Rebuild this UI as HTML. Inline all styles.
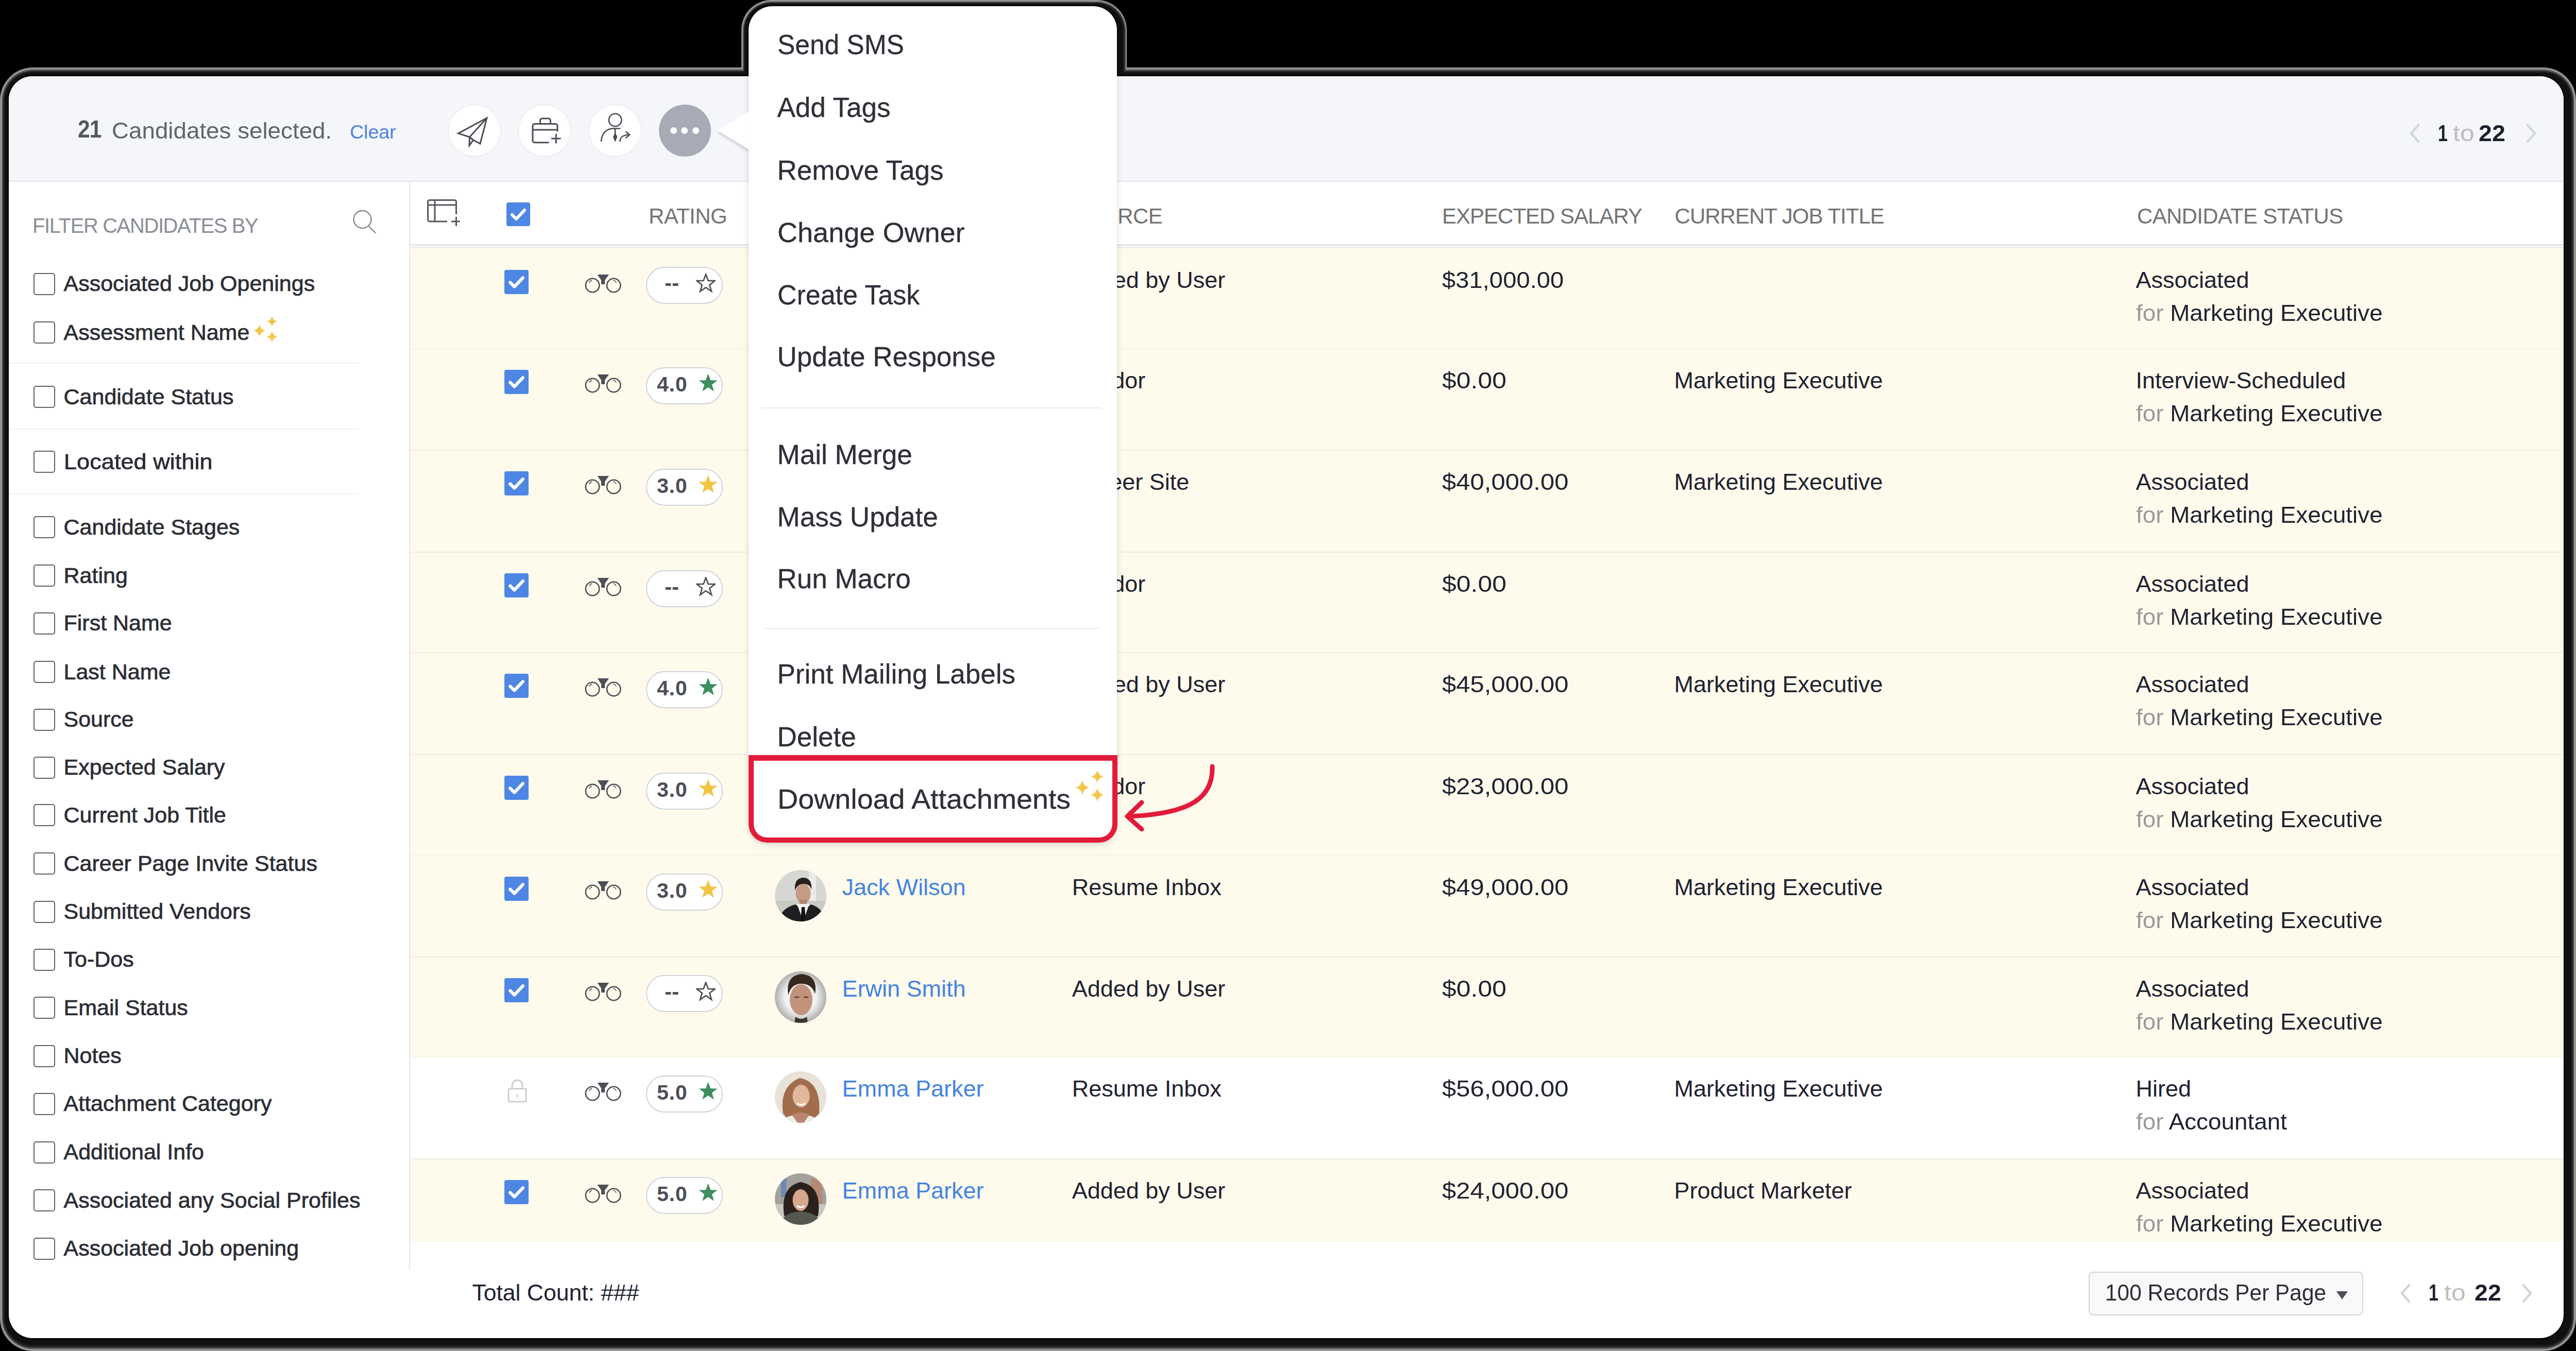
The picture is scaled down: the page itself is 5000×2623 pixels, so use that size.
<!DOCTYPE html>
<html><head><meta charset="utf-8"><title>Candidates</title>
<style>
html,body{margin:0;padding:0;}
body{width:5000px;height:2623px;background:#000;position:relative;overflow:hidden;font-family:"Liberation Sans", sans-serif;}
.r{position:absolute;}
.t{position:absolute;white-space:nowrap;line-height:1em;}
</style></head><body>
<div class="r" style="left:0px;top:131px;width:5000px;height:2492px;background:#949494;border-radius:64px;"></div><div class="r" style="left:1439px;top:0px;width:748px;height:158px;background:#949494;border-radius:58px 58px 0 0;"></div><div class="r" style="left:4px;top:135px;width:4992px;height:2484px;background:#4f4f4f;border-radius:60px;"></div><div class="r" style="left:1441.5px;top:3px;width:743.0px;height:155px;background:#4f4f4f;border-radius:56px 56px 0 0;"></div><div class="r" style="left:6px;top:138px;width:4988px;height:2478px;background:#222222;border-radius:57px;"></div><div class="r" style="left:1443.5px;top:5px;width:739.0px;height:153px;background:#222222;border-radius:54px 54px 0 0;"></div><div class="r" style="left:9px;top:141px;width:4982px;height:2471px;background:#101010;border-radius:54px;"></div><div class="r" style="left:1445px;top:7px;width:735px;height:151px;background:#101010;border-radius:52px 52px 0 0;"></div><div class="r" style="left:15px;top:146px;width:4963px;height:2455px;background:#040404;border-radius:48px;"></div><div class="r" style="left:1451px;top:11px;width:719px;height:147px;background:#040404;border-radius:48px 48px 0 0;"></div><div class="r" style="left:17px;top:148px;width:4959px;height:2450px;background:#fff;border-radius:46px;overflow:hidden;"><div class="r" style="left:-17px;top:-148px;width:5000px;height:2623px;"><div class="r" style="left:17px;top:148px;width:4959px;height:203px;background:#f4f6fa;"></div><div class="r" style="left:17px;top:351px;width:4959px;height:2px;background:#e3e4e7;"></div><div class="t" style="left:151.0px;top:225.5px;font-size:49px;color:#55575f;transform:scaleX(0.87);transform-origin:0 0;font-weight:700;letter-spacing:-1px;">21</div><div class="t" style="left:217.0px;top:231.9px;font-size:44.5px;color:#62646c;transform:scaleX(1.028);transform-origin:0 0;">Candidates selected.</div><div class="t" style="left:679.0px;top:237.9px;font-size:37.5px;color:#4c84e2;">Clear</div><div class="r" style="left:869.6px;top:202.5px;width:102.0px;height:101.5px;background:#fff;border:1.5px solid #e2e3e7;box-sizing:border-box;border-radius:50%;"></div><div class="r" style="left:1006px;top:202.5px;width:102px;height:101.5px;background:#fff;border:1.5px solid #e2e3e7;box-sizing:border-box;border-radius:50%;"></div><div class="r" style="left:1142.5px;top:202.5px;width:102.0px;height:101.5px;background:#fff;border:1.5px solid #e2e3e7;box-sizing:border-box;border-radius:50%;"></div><div class="r" style="left:1278.5px;top:203px;width:101.0px;height:101px;background:#a6abb6;border-radius:50%;"></div><div class="r" style="left:1300.5px;top:247px;width:13.0px;height:13px;background:#fff;border-radius:50%;"></div><div class="r" style="left:1322.0px;top:247px;width:13.0px;height:13px;background:#fff;border-radius:50%;"></div><div class="r" style="left:1343.5px;top:247px;width:13.0px;height:13px;background:#fff;border-radius:50%;"></div><svg class="r" style="left:870px;top:203px;" width="101" height="101" viewBox="0 0 101 101"><g fill="none" stroke="#4b4d56" stroke-width="3" stroke-linejoin="miter"><path d="M75 26 L19.5 56 L41.5 63 L41 79.5 L48.5 69 L62 76 Z"/><path d="M75 26 L41.5 63 L48.5 69"/></g></svg><svg class="r" style="left:1006.5px;top:203px;" width="101" height="101" viewBox="0 0 101 101"><g fill="none" stroke="#4b4d56" stroke-width="3"><path d="M58.5 73.8 H31 a4 4 0 0 1 -4 -4 V41.5 a4 4 0 0 1 4 -4 H71 a4 4 0 0 1 4 4 V52.6"/><path d="M27 49 H75"/><path d="M41.5 37.5 V31 a4 4 0 0 1 4 -4 H57.5 a4 4 0 0 1 4 4 V37.5"/><path d="M72.3 57 V75.5 M63 66 H81.6"/></g></svg><svg class="r" style="left:1142.5px;top:203px;" width="102" height="101" viewBox="0 0 102 101"><g fill="none" stroke="#4b4d56" stroke-width="2.6"><circle cx="51" cy="30" r="12.3"/><path d="M24 72 C24.5 56 34 47 47 46.5 H61"/><path d="M51 47 V60"/><path d="M51 57 L48.3 63 L51 69.5 L53.7 63 Z" fill="#4b4d56"/><path d="M60.5 72 C60.5 63 66 59 78.5 58.5"/><path d="M71.5 52.5 L79 58.5 L71.5 65"/></g></svg><svg class="r" style="left:4672px;top:239px;" width="30" height="40" viewBox="0 0 30 40"><path d="M22 4 L8 20 L22 36" fill="none" stroke="#d3d6db" stroke-width="4.6" stroke-linecap="round"/></svg><div class="t" style="left:4731.5px;top:238.1px;font-size:43.5px;color:#1d1f2c;transform:scaleX(0.78);transform-origin:0 0;font-weight:700;">1</div><div class="t" style="left:4761.0px;top:238.1px;font-size:43.5px;color:#bdbdbd;transform:scaleX(1.15);transform-origin:0 0;">to</div><div class="t" style="left:4811.0px;top:238.1px;font-size:43.5px;color:#1d1f2c;transform:scaleX(1.07);transform-origin:0 0;font-weight:700;">22</div><svg class="r" style="left:4898px;top:239px;" width="30" height="40" viewBox="0 0 30 40"><path d="M8 4 L22 20 L8 36" fill="none" stroke="#d3d6db" stroke-width="4.6" stroke-linecap="round"/></svg><div class="r" style="left:794px;top:353px;width:2px;height:2112px;background:#e6e6e9;"></div><div class="t" style="left:63.0px;top:418.4px;font-size:40px;color:#8b8e96;letter-spacing:-1.4px;">FILTER CANDIDATES BY</div><svg class="r" style="left:680px;top:403px;" width="56" height="56" viewBox="0 0 56 56"><g fill="none" stroke="#85878d" stroke-width="2.4"><circle cx="23.5" cy="23" r="17"/><path d="M35 35.5 L48.5 49" stroke-linecap="round"/></g></svg><div class="r" style="left:64.5px;top:529.6px;width:42.5px;height:43.0px;border:2.5px solid #5d6069;border-radius:5px;box-sizing:border-box;background:#fff;"></div><div class="t" style="left:123.5px;top:529.2px;font-size:43px;color:#2b2d34;-webkit-text-stroke:0.7px #2b2d34;">Associated Job Openings</div><div class="r" style="left:64.5px;top:624px;width:42.5px;height:43px;border:2.5px solid #5d6069;border-radius:5px;box-sizing:border-box;background:#fff;"></div><div class="t" style="left:123.5px;top:623.6px;font-size:43px;color:#2b2d34;-webkit-text-stroke:0.7px #2b2d34;">Assessment Name</div><div class="r" style="left:64.5px;top:749.4px;width:42.5px;height:43.0px;border:2.5px solid #5d6069;border-radius:5px;box-sizing:border-box;background:#fff;"></div><div class="t" style="left:123.5px;top:749.0px;font-size:43px;color:#2b2d34;-webkit-text-stroke:0.7px #2b2d34;">Candidate Status</div><div class="r" style="left:64.5px;top:875.4px;width:42.5px;height:43.0px;border:2.5px solid #5d6069;border-radius:5px;box-sizing:border-box;background:#fff;"></div><div class="t" style="left:123.5px;top:875.0px;font-size:43px;color:#2b2d34;transform:scaleX(1.05);transform-origin:0 0;-webkit-text-stroke:0.7px #2b2d34;">Located within</div><div class="r" style="left:64.5px;top:1002px;width:42.5px;height:43px;border:2.5px solid #5d6069;border-radius:5px;box-sizing:border-box;background:#fff;"></div><div class="t" style="left:123.5px;top:1001.6px;font-size:43px;color:#2b2d34;-webkit-text-stroke:0.7px #2b2d34;">Candidate Stages</div><div class="r" style="left:64.5px;top:1096px;width:42.5px;height:43px;border:2.5px solid #5d6069;border-radius:5px;box-sizing:border-box;background:#fff;"></div><div class="t" style="left:123.5px;top:1095.6px;font-size:43px;color:#2b2d34;-webkit-text-stroke:0.7px #2b2d34;">Rating</div><div class="r" style="left:64.5px;top:1188.7px;width:42.5px;height:43.0px;border:2.5px solid #5d6069;border-radius:5px;box-sizing:border-box;background:#fff;"></div><div class="t" style="left:123.5px;top:1188.3px;font-size:43px;color:#2b2d34;-webkit-text-stroke:0.7px #2b2d34;">First Name</div><div class="r" style="left:64.5px;top:1283px;width:42.5px;height:43px;border:2.5px solid #5d6069;border-radius:5px;box-sizing:border-box;background:#fff;"></div><div class="t" style="left:123.5px;top:1282.6px;font-size:43px;color:#2b2d34;-webkit-text-stroke:0.7px #2b2d34;">Last Name</div><div class="r" style="left:64.5px;top:1375.7px;width:42.5px;height:43.0px;border:2.5px solid #5d6069;border-radius:5px;box-sizing:border-box;background:#fff;"></div><div class="t" style="left:123.5px;top:1375.3px;font-size:43px;color:#2b2d34;-webkit-text-stroke:0.7px #2b2d34;">Source</div><div class="r" style="left:64.5px;top:1468.5px;width:42.5px;height:43.0px;border:2.5px solid #5d6069;border-radius:5px;box-sizing:border-box;background:#fff;"></div><div class="t" style="left:123.5px;top:1468.1px;font-size:43px;color:#2b2d34;-webkit-text-stroke:0.7px #2b2d34;">Expected Salary</div><div class="r" style="left:64.5px;top:1561px;width:42.5px;height:43px;border:2.5px solid #5d6069;border-radius:5px;box-sizing:border-box;background:#fff;"></div><div class="t" style="left:123.5px;top:1560.6px;font-size:43px;color:#2b2d34;-webkit-text-stroke:0.7px #2b2d34;">Current Job Title</div><div class="r" style="left:64.5px;top:1655px;width:42.5px;height:43px;border:2.5px solid #5d6069;border-radius:5px;box-sizing:border-box;background:#fff;"></div><div class="t" style="left:123.5px;top:1654.6px;font-size:43px;color:#2b2d34;-webkit-text-stroke:0.7px #2b2d34;">Career Page Invite Status</div><div class="r" style="left:64.5px;top:1748.5px;width:42.5px;height:43.0px;border:2.5px solid #5d6069;border-radius:5px;box-sizing:border-box;background:#fff;"></div><div class="t" style="left:123.5px;top:1748.1px;font-size:43px;color:#2b2d34;-webkit-text-stroke:0.7px #2b2d34;">Submitted Vendors</div><div class="r" style="left:64.5px;top:1841.8px;width:42.5px;height:43.0px;border:2.5px solid #5d6069;border-radius:5px;box-sizing:border-box;background:#fff;"></div><div class="t" style="left:123.5px;top:1841.4px;font-size:43px;color:#2b2d34;-webkit-text-stroke:0.7px #2b2d34;">To-Dos</div><div class="r" style="left:64.5px;top:1935px;width:42.5px;height:43px;border:2.5px solid #5d6069;border-radius:5px;box-sizing:border-box;background:#fff;"></div><div class="t" style="left:123.5px;top:1934.6px;font-size:43px;color:#2b2d34;-webkit-text-stroke:0.7px #2b2d34;">Email Status</div><div class="r" style="left:64.5px;top:2028.5px;width:42.5px;height:43.0px;border:2.5px solid #5d6069;border-radius:5px;box-sizing:border-box;background:#fff;"></div><div class="t" style="left:123.5px;top:2028.1px;font-size:43px;color:#2b2d34;-webkit-text-stroke:0.7px #2b2d34;">Notes</div><div class="r" style="left:64.5px;top:2121.8px;width:42.5px;height:43.0px;border:2.5px solid #5d6069;border-radius:5px;box-sizing:border-box;background:#fff;"></div><div class="t" style="left:123.5px;top:2121.4px;font-size:43px;color:#2b2d34;-webkit-text-stroke:0.7px #2b2d34;">Attachment Category</div><div class="r" style="left:64.5px;top:2215.5px;width:42.5px;height:43.0px;border:2.5px solid #5d6069;border-radius:5px;box-sizing:border-box;background:#fff;"></div><div class="t" style="left:123.5px;top:2215.1px;font-size:43px;color:#2b2d34;-webkit-text-stroke:0.7px #2b2d34;">Additional Info</div><div class="r" style="left:64.5px;top:2309px;width:42.5px;height:43px;border:2.5px solid #5d6069;border-radius:5px;box-sizing:border-box;background:#fff;"></div><div class="t" style="left:123.5px;top:2308.6px;font-size:43px;color:#2b2d34;-webkit-text-stroke:0.7px #2b2d34;">Associated any Social Profiles</div><div class="r" style="left:64.5px;top:2402.5px;width:42.5px;height:43.0px;border:2.5px solid #5d6069;border-radius:5px;box-sizing:border-box;background:#fff;"></div><div class="t" style="left:123.5px;top:2402.1px;font-size:43px;color:#2b2d34;-webkit-text-stroke:0.7px #2b2d34;">Associated Job opening</div><div class="r" style="left:17px;top:704px;width:680px;height:2px;background:#efeff1;"></div><div class="r" style="left:17px;top:832px;width:680px;height:2px;background:#efeff1;"></div><div class="r" style="left:17px;top:958px;width:680px;height:2px;background:#efeff1;"></div><svg class="r" style="left:491px;top:613px;" width="49" height="52" viewBox="0 0 49 52"><g fill="#f3c54a"><path d="M37 0.5 Q38.68 9.32 47.5 11 Q38.68 12.68 37 21.5 Q35.32 12.68 26.5 11 Q35.32 9.32 37 0.5Z"/><path d="M12.5 17 Q14.42 27.08 24.5 29 Q14.42 30.92 12.5 41 Q10.58 30.92 0.5 29 Q10.58 27.08 12.5 17Z"/><path d="M37 30 Q38.76 39.24 48 41 Q38.76 42.76 37 52 Q35.24 42.76 26 41 Q35.24 39.24 37 30Z"/></g></svg><div class="r" style="left:796px;top:474px;width:4180px;height:3px;background:#e3e3e6;"></div><div class="r" style="left:796px;top:479px;width:4180px;height:3px;background:#ececef;"></div><svg class="r" style="left:828px;top:386px;" width="68" height="56" viewBox="0 0 68 56"><g fill="none" stroke="#56585f" stroke-width="3"><path d="M40 44 H6 a3.5 3.5 0 0 1 -3.5 -3.5 V6 a3.5 3.5 0 0 1 3.5 -3.5 H54 a3.5 3.5 0 0 1 3.5 3.5 V30"/><path d="M2.5 12 H57.5 M16 3 V44"/><path d="M57.5 35 V53 M48 44 H65"/></g></svg><div class="r" style="left:983px;top:393px;width:46px;height:46px;background:#4e86e3;border-radius:4px;"></div><svg class="r" style="left:983px;top:393px;" width="46" height="46" viewBox="0 0 46 46"><path d="M11 24 L19 32 L35 15" fill="none" stroke="#fff" stroke-width="6" stroke-linecap="round" stroke-linejoin="round"/></svg><div class="t" style="left:1259.0px;top:399.0px;font-size:42px;color:#737373;letter-spacing:-0.6px;">RATING</div><div class="t" style="left:1504.0px;top:399.0px;font-size:42px;color:#737373;letter-spacing:-0.6px;">CANDIDATE NAME</div><div class="t" style="left:2080.0px;top:399.0px;font-size:42px;color:#737373;letter-spacing:-0.6px;">SOURCE</div><div class="t" style="left:2799.0px;top:399.0px;font-size:42px;color:#737373;letter-spacing:-1.0px;">EXPECTED SALARY</div><div class="t" style="left:3250.6px;top:399.0px;font-size:42px;color:#737373;letter-spacing:-1.0px;">CURRENT JOB TITLE</div><div class="t" style="left:4148.0px;top:399.0px;font-size:42px;color:#737373;letter-spacing:-0.7px;">CANDIDATE STATUS</div><div class="r" style="left:796px;top:482px;width:4180px;height:195px;background:#fefbed;"></div><div class="r" style="left:979px;top:524px;width:47px;height:47px;background:#4e86e3;border-radius:4px;"></div><svg class="r" style="left:979px;top:524px;" width="47" height="47" viewBox="0 0 46 46"><path d="M11 24 L19 32 L35 15" fill="none" stroke="#fff" stroke-width="6" stroke-linecap="round" stroke-linejoin="round"/></svg><svg class="r" style="left:1134px;top:532px;" width="74" height="38" viewBox="0 0 74 38"><g fill="none" stroke="#4d4f57" stroke-width="2.6"><circle cx="16" cy="22" r="13.2"/><circle cx="57.2" cy="22" r="13.2"/><path d="M10 17 a8 8 0 0 1 5 -5" stroke-width="1.4"/><path d="M56 12 a8 8 0 0 1 6 5" stroke-width="1.4"/></g><path d="M25.5 1 H48 L40 12 V20 H33 V12 Z" fill="#4d4f57"/></svg><div class="r" style="left:1254px;top:518px;width:149px;height:72px;background:#fff;border:2px solid #d0d3da;border-radius:36px;box-sizing:border-box;"></div><div class="t" style="left:1290.0px;top:529.4px;font-size:42px;color:#4d4f57;font-weight:700;">--</div><svg class="r" style="left:1350.5px;top:531px;" width="38" height="38" viewBox="0 0 40 40"><path d="M20 1.5 L24.8 14.6 L38.5 14.9 L27.6 23.3 L31.6 36.6 L20 28.6 L8.4 36.6 L12.4 23.3 L1.5 14.9 L15.2 14.6 Z" fill="none" stroke="#4d4f57" stroke-width="2.8" stroke-linejoin="miter"/></svg><svg class="r" style="left:1504px;top:510px;" width="100" height="100" viewBox="0 0 100 100"><defs><clipPath id="av0"><circle cx="50" cy="50" r="50"/></clipPath></defs><g clip-path="url(#av0)"><rect width="100" height="100" fill="#e7e3d9"/><path d="M16 82 Q8 30 48 13 Q90 20 86 82 Q72 98 50 94 Q26 98 16 82Z" fill="#a26d4b"/><path d="M22 100 Q30 80 50 80 Q70 80 78 100Z" fill="#b98670"/><path d="M14 100 Q20 88 34 86 L44 100Z M86 100 Q80 88 66 86 L56 100Z" fill="#efede8"/><ellipse cx="51" cy="48" rx="16.5" ry="22" fill="#e3b79d"/><path d="M43 62 Q51 68 59 62" stroke="#fff" stroke-width="3" fill="none"/></g></svg><div class="t" style="left:1634.5px;top:521.4px;font-size:45px;color:#4483e0;">Ella Brown</div><div class="t" style="left:2080.7px;top:521.4px;font-size:45px;color:#1f2230;">Added by User</div><div class="t" style="left:2798.5px;top:521.4px;font-size:45px;color:#1f2230;transform:scaleX(1.049);transform-origin:0 0;">$31,000.00</div><div class="t" style="left:4145.5px;top:521.4px;font-size:45px;color:#1f2230;">Associated</div><div class="t" style="left:4145.5px;top:585.4px;font-size:45px;color:#1f2230;transform:scaleX(1.018);transform-origin:0 0;"><span style="color:#9a9a9c">for</span> Marketing Executive</div><div class="r" style="left:796px;top:677px;width:4180px;height:197px;background:#fefbed;"></div><div class="r" style="left:796px;top:676.55px;width:4180px;height:1.5px;background:#f0ece0;"></div><div class="r" style="left:979px;top:718px;width:47px;height:47px;background:#4e86e3;border-radius:4px;"></div><svg class="r" style="left:979px;top:718px;" width="47" height="47" viewBox="0 0 46 46"><path d="M11 24 L19 32 L35 15" fill="none" stroke="#fff" stroke-width="6" stroke-linecap="round" stroke-linejoin="round"/></svg><svg class="r" style="left:1134px;top:726px;" width="74" height="38" viewBox="0 0 74 38"><g fill="none" stroke="#4d4f57" stroke-width="2.6"><circle cx="16" cy="22" r="13.2"/><circle cx="57.2" cy="22" r="13.2"/><path d="M10 17 a8 8 0 0 1 5 -5" stroke-width="1.4"/><path d="M56 12 a8 8 0 0 1 6 5" stroke-width="1.4"/></g><path d="M25.5 1 H48 L40 12 V20 H33 V12 Z" fill="#4d4f57"/></svg><div class="r" style="left:1254px;top:713px;width:149px;height:72px;background:#fff;border:2px solid #d0d3da;border-radius:36px;box-sizing:border-box;"></div><div class="t" style="left:1275.0px;top:725.8px;font-size:41px;color:#4d4f57;font-weight:700;letter-spacing:0.8px;">4.0</div><svg class="r" style="left:1355px;top:724px;" width="39" height="39" viewBox="0 0 40 40"><path d="M20 1.5 L24.8 14.6 L38.5 14.9 L27.6 23.3 L31.6 36.6 L20 28.6 L8.4 36.6 L12.4 23.3 L1.5 14.9 L15.2 14.6 Z" fill="#3e8e5e"/></svg><svg class="r" style="left:1504px;top:705px;" width="100" height="100" viewBox="0 0 100 100"><defs><clipPath id="av1"><circle cx="50" cy="50" r="50"/></clipPath></defs><g clip-path="url(#av1)"><rect width="100" height="100" fill="#d6d6d4"/><rect x="66" y="0" width="14" height="100" fill="#ecebe8"/><rect x="0" y="60" width="100" height="40" fill="#c9c9c6"/><ellipse cx="55" cy="46" rx="14.5" ry="19" fill="#c49b84"/><path d="M39 40 Q37 16 55 15 Q73 16 71 38 Q68 27 56 27 Q44 27 39 40Z" fill="#27211e"/><rect x="48" y="58" width="14" height="12" fill="#b08570"/><path d="M6 100 Q12 74 40 67 L55 80 L70 67 Q94 74 98 100Z" fill="#1d1d22"/><path d="M43 66 L55 100 L67 66 Z" fill="#f1f1f1"/><path d="M52 72 L58 72 L60 100 L50 100Z" fill="#141414"/></g></svg><div class="t" style="left:1634.5px;top:716.2px;font-size:45px;color:#4483e0;">Liam Scott</div><div class="t" style="left:2080.7px;top:716.2px;font-size:45px;color:#1f2230;">Vendor</div><div class="t" style="left:2798.5px;top:716.2px;font-size:45px;color:#1f2230;transform:scaleX(1.11);transform-origin:0 0;">$0.00</div><div class="t" style="left:3249.4px;top:716.2px;font-size:45px;color:#1f2230;">Marketing Executive</div><div class="t" style="left:4145.5px;top:716.2px;font-size:45px;color:#1f2230;">Interview-Scheduled</div><div class="t" style="left:4145.5px;top:780.2px;font-size:45px;color:#1f2230;transform:scaleX(1.018);transform-origin:0 0;"><span style="color:#9a9a9c">for</span> Marketing Executive</div><div class="r" style="left:796px;top:874px;width:4180px;height:198px;background:#fefbed;"></div><div class="r" style="left:796px;top:873.45px;width:4180px;height:1.5px;background:#f0ece0;"></div><div class="r" style="left:979px;top:915px;width:47px;height:47px;background:#4e86e3;border-radius:4px;"></div><svg class="r" style="left:979px;top:915px;" width="47" height="47" viewBox="0 0 46 46"><path d="M11 24 L19 32 L35 15" fill="none" stroke="#fff" stroke-width="6" stroke-linecap="round" stroke-linejoin="round"/></svg><svg class="r" style="left:1134px;top:923px;" width="74" height="38" viewBox="0 0 74 38"><g fill="none" stroke="#4d4f57" stroke-width="2.6"><circle cx="16" cy="22" r="13.2"/><circle cx="57.2" cy="22" r="13.2"/><path d="M10 17 a8 8 0 0 1 5 -5" stroke-width="1.4"/><path d="M56 12 a8 8 0 0 1 6 5" stroke-width="1.4"/></g><path d="M25.5 1 H48 L40 12 V20 H33 V12 Z" fill="#4d4f57"/></svg><div class="r" style="left:1254px;top:910px;width:149px;height:72px;background:#fff;border:2px solid #d0d3da;border-radius:36px;box-sizing:border-box;"></div><div class="t" style="left:1275.0px;top:922.7px;font-size:41px;color:#4d4f57;font-weight:700;letter-spacing:0.8px;">3.0</div><svg class="r" style="left:1355px;top:921px;" width="39" height="39" viewBox="0 0 40 40"><path d="M20 1.5 L24.8 14.6 L38.5 14.9 L27.6 23.3 L31.6 36.6 L20 28.6 L8.4 36.6 L12.4 23.3 L1.5 14.9 L15.2 14.6 Z" fill="#f2c443"/></svg><svg class="r" style="left:1504px;top:902px;" width="100" height="100" viewBox="0 0 100 100"><defs><clipPath id="av2"><circle cx="50" cy="50" r="50"/></clipPath></defs><g clip-path="url(#av2)"><defs><radialGradient id="g2" cx="50%" cy="50%" r="60%"><stop offset="0.5" stop-color="#f2f2f2"/><stop offset="1" stop-color="#8e8e8e"/></radialGradient></defs><rect width="100" height="100" fill="url(#g2)"/><ellipse cx="51" cy="55" rx="22" ry="30" fill="#c2937c"/><path d="M26 46 Q20 8 52 5 Q84 8 78 44 Q72 24 51 24 Q32 24 26 46Z" fill="#35291f"/><path d="M40 88 Q51 96 62 88 L64 100 L38 100Z" fill="#3e322b"/><path d="M38 50 h9 M56 50 h9" stroke="#5a4033" stroke-width="2.5"/></g></svg><div class="t" style="left:1634.5px;top:913.1px;font-size:45px;color:#4483e0;">Noah Hill</div><div class="t" style="left:2080.7px;top:913.1px;font-size:45px;color:#1f2230;">Career Site</div><div class="t" style="left:2798.5px;top:913.1px;font-size:45px;color:#1f2230;transform:scaleX(1.09);transform-origin:0 0;">$40,000.00</div><div class="t" style="left:3249.4px;top:913.1px;font-size:45px;color:#1f2230;">Marketing Executive</div><div class="t" style="left:4145.5px;top:913.1px;font-size:45px;color:#1f2230;">Associated</div><div class="t" style="left:4145.5px;top:977.1px;font-size:45px;color:#1f2230;transform:scaleX(1.018);transform-origin:0 0;"><span style="color:#9a9a9c">for</span> Marketing Executive</div><div class="r" style="left:796px;top:1072px;width:4180px;height:195px;background:#fefbed;"></div><div class="r" style="left:796px;top:1071.05px;width:4180px;height:1.5px;background:#f0ece0;"></div><div class="r" style="left:979px;top:1113px;width:47px;height:47px;background:#4e86e3;border-radius:4px;"></div><svg class="r" style="left:979px;top:1113px;" width="47" height="47" viewBox="0 0 46 46"><path d="M11 24 L19 32 L35 15" fill="none" stroke="#fff" stroke-width="6" stroke-linecap="round" stroke-linejoin="round"/></svg><svg class="r" style="left:1134px;top:1121px;" width="74" height="38" viewBox="0 0 74 38"><g fill="none" stroke="#4d4f57" stroke-width="2.6"><circle cx="16" cy="22" r="13.2"/><circle cx="57.2" cy="22" r="13.2"/><path d="M10 17 a8 8 0 0 1 5 -5" stroke-width="1.4"/><path d="M56 12 a8 8 0 0 1 6 5" stroke-width="1.4"/></g><path d="M25.5 1 H48 L40 12 V20 H33 V12 Z" fill="#4d4f57"/></svg><div class="r" style="left:1254px;top:1107px;width:149px;height:72px;background:#fff;border:2px solid #d0d3da;border-radius:36px;box-sizing:border-box;"></div><div class="t" style="left:1290.0px;top:1118.7px;font-size:42px;color:#4d4f57;font-weight:700;">--</div><svg class="r" style="left:1350.5px;top:1120px;" width="38" height="38" viewBox="0 0 40 40"><path d="M20 1.5 L24.8 14.6 L38.5 14.9 L27.6 23.3 L31.6 36.6 L20 28.6 L8.4 36.6 L12.4 23.3 L1.5 14.9 L15.2 14.6 Z" fill="none" stroke="#4d4f57" stroke-width="2.8" stroke-linejoin="miter"/></svg><svg class="r" style="left:1504px;top:1100px;" width="100" height="100" viewBox="0 0 100 100"><defs><clipPath id="av3"><circle cx="50" cy="50" r="50"/></clipPath></defs><g clip-path="url(#av3)"><rect width="100" height="100" fill="#a2a19b"/><rect x="12" y="6" width="10" height="40" fill="#6d86b8"/><rect x="70" y="10" width="22" height="50" fill="#b48a76"/><rect x="0" y="60" width="100" height="40" fill="#c9c7c0"/><path d="M18 82 Q10 26 50 17 Q92 24 84 82 Q70 94 50 90 Q30 94 18 82Z" fill="#2a211c"/><ellipse cx="50" cy="52" rx="15.5" ry="21" fill="#d6a78c"/><path d="M43 63 Q50 69 57 63" stroke="#fff" stroke-width="3" fill="none"/><path d="M8 100 Q16 76 50 74 Q84 76 92 100Z" fill="#56574f"/></g></svg><div class="t" style="left:1634.5px;top:1110.7px;font-size:45px;color:#4483e0;">Mia Lewis</div><div class="t" style="left:2080.7px;top:1110.7px;font-size:45px;color:#1f2230;">Vendor</div><div class="t" style="left:2798.5px;top:1110.7px;font-size:45px;color:#1f2230;transform:scaleX(1.11);transform-origin:0 0;">$0.00</div><div class="t" style="left:4145.5px;top:1110.7px;font-size:45px;color:#1f2230;">Associated</div><div class="t" style="left:4145.5px;top:1174.7px;font-size:45px;color:#1f2230;transform:scaleX(1.018);transform-origin:0 0;"><span style="color:#9a9a9c">for</span> Marketing Executive</div><div class="r" style="left:796px;top:1267px;width:4180px;height:198px;background:#fefbed;"></div><div class="r" style="left:796px;top:1266.35px;width:4180px;height:1.5px;background:#f0ece0;"></div><div class="r" style="left:979px;top:1308px;width:47px;height:47px;background:#4e86e3;border-radius:4px;"></div><svg class="r" style="left:979px;top:1308px;" width="47" height="47" viewBox="0 0 46 46"><path d="M11 24 L19 32 L35 15" fill="none" stroke="#fff" stroke-width="6" stroke-linecap="round" stroke-linejoin="round"/></svg><svg class="r" style="left:1134px;top:1316px;" width="74" height="38" viewBox="0 0 74 38"><g fill="none" stroke="#4d4f57" stroke-width="2.6"><circle cx="16" cy="22" r="13.2"/><circle cx="57.2" cy="22" r="13.2"/><path d="M10 17 a8 8 0 0 1 5 -5" stroke-width="1.4"/><path d="M56 12 a8 8 0 0 1 6 5" stroke-width="1.4"/></g><path d="M25.5 1 H48 L40 12 V20 H33 V12 Z" fill="#4d4f57"/></svg><div class="r" style="left:1254px;top:1303px;width:149px;height:72px;background:#fff;border:2px solid #d0d3da;border-radius:36px;box-sizing:border-box;"></div><div class="t" style="left:1275.0px;top:1315.6px;font-size:41px;color:#4d4f57;font-weight:700;letter-spacing:0.8px;">4.0</div><svg class="r" style="left:1355px;top:1314px;" width="39" height="39" viewBox="0 0 40 40"><path d="M20 1.5 L24.8 14.6 L38.5 14.9 L27.6 23.3 L31.6 36.6 L20 28.6 L8.4 36.6 L12.4 23.3 L1.5 14.9 L15.2 14.6 Z" fill="#3e8e5e"/></svg><svg class="r" style="left:1504px;top:1295px;" width="100" height="100" viewBox="0 0 100 100"><defs><clipPath id="av4"><circle cx="50" cy="50" r="50"/></clipPath></defs><g clip-path="url(#av4)"><rect width="100" height="100" fill="#e7e3d9"/><path d="M16 82 Q8 30 48 13 Q90 20 86 82 Q72 98 50 94 Q26 98 16 82Z" fill="#a26d4b"/><path d="M22 100 Q30 80 50 80 Q70 80 78 100Z" fill="#b98670"/><path d="M14 100 Q20 88 34 86 L44 100Z M86 100 Q80 88 66 86 L56 100Z" fill="#efede8"/><ellipse cx="51" cy="48" rx="16.5" ry="22" fill="#e3b79d"/><path d="M43 62 Q51 68 59 62" stroke="#fff" stroke-width="3" fill="none"/></g></svg><div class="t" style="left:1634.5px;top:1306.0px;font-size:45px;color:#4483e0;">Ava Young</div><div class="t" style="left:2080.7px;top:1306.0px;font-size:45px;color:#1f2230;">Added by User</div><div class="t" style="left:2798.5px;top:1306.0px;font-size:45px;color:#1f2230;transform:scaleX(1.09);transform-origin:0 0;">$45,000.00</div><div class="t" style="left:3249.4px;top:1306.0px;font-size:45px;color:#1f2230;">Marketing Executive</div><div class="t" style="left:4145.5px;top:1306.0px;font-size:45px;color:#1f2230;">Associated</div><div class="t" style="left:4145.5px;top:1370.0px;font-size:45px;color:#1f2230;transform:scaleX(1.018);transform-origin:0 0;"><span style="color:#9a9a9c">for</span> Marketing Executive</div><div class="r" style="left:796px;top:1465px;width:4180px;height:196px;background:#fefbed;"></div><div class="r" style="left:796px;top:1464.15px;width:4180px;height:1.5px;background:#f0ece0;"></div><div class="r" style="left:979px;top:1506px;width:47px;height:47px;background:#4e86e3;border-radius:4px;"></div><svg class="r" style="left:979px;top:1506px;" width="47" height="47" viewBox="0 0 46 46"><path d="M11 24 L19 32 L35 15" fill="none" stroke="#fff" stroke-width="6" stroke-linecap="round" stroke-linejoin="round"/></svg><svg class="r" style="left:1134px;top:1514px;" width="74" height="38" viewBox="0 0 74 38"><g fill="none" stroke="#4d4f57" stroke-width="2.6"><circle cx="16" cy="22" r="13.2"/><circle cx="57.2" cy="22" r="13.2"/><path d="M10 17 a8 8 0 0 1 5 -5" stroke-width="1.4"/><path d="M56 12 a8 8 0 0 1 6 5" stroke-width="1.4"/></g><path d="M25.5 1 H48 L40 12 V20 H33 V12 Z" fill="#4d4f57"/></svg><div class="r" style="left:1254px;top:1500px;width:149px;height:72px;background:#fff;border:2px solid #d0d3da;border-radius:36px;box-sizing:border-box;"></div><div class="t" style="left:1275.0px;top:1513.4px;font-size:41px;color:#4d4f57;font-weight:700;letter-spacing:0.8px;">3.0</div><svg class="r" style="left:1355px;top:1511px;" width="39" height="39" viewBox="0 0 40 40"><path d="M20 1.5 L24.8 14.6 L38.5 14.9 L27.6 23.3 L31.6 36.6 L20 28.6 L8.4 36.6 L12.4 23.3 L1.5 14.9 L15.2 14.6 Z" fill="#f2c443"/></svg><svg class="r" style="left:1504px;top:1493px;" width="100" height="100" viewBox="0 0 100 100"><defs><clipPath id="av5"><circle cx="50" cy="50" r="50"/></clipPath></defs><g clip-path="url(#av5)"><rect width="100" height="100" fill="#d6d6d4"/><rect x="66" y="0" width="14" height="100" fill="#ecebe8"/><rect x="0" y="60" width="100" height="40" fill="#c9c9c6"/><ellipse cx="55" cy="46" rx="14.5" ry="19" fill="#c49b84"/><path d="M39 40 Q37 16 55 15 Q73 16 71 38 Q68 27 56 27 Q44 27 39 40Z" fill="#27211e"/><rect x="48" y="58" width="14" height="12" fill="#b08570"/><path d="M6 100 Q12 74 40 67 L55 80 L70 67 Q94 74 98 100Z" fill="#1d1d22"/><path d="M43 66 L55 100 L67 66 Z" fill="#f1f1f1"/><path d="M52 72 L58 72 L60 100 L50 100Z" fill="#141414"/></g></svg><div class="t" style="left:1634.5px;top:1503.8px;font-size:45px;color:#4483e0;">Ryan King</div><div class="t" style="left:2080.7px;top:1503.8px;font-size:45px;color:#1f2230;">Vendor</div><div class="t" style="left:2798.5px;top:1503.8px;font-size:45px;color:#1f2230;transform:scaleX(1.09);transform-origin:0 0;">$23,000.00</div><div class="t" style="left:4145.5px;top:1503.8px;font-size:45px;color:#1f2230;">Associated</div><div class="t" style="left:4145.5px;top:1567.8px;font-size:45px;color:#1f2230;transform:scaleX(1.018);transform-origin:0 0;"><span style="color:#9a9a9c">for</span> Marketing Executive</div><div class="r" style="left:796px;top:1661px;width:4180px;height:197px;background:#fefbed;"></div><div class="r" style="left:796px;top:1659.85px;width:4180px;height:1.5px;background:#f0ece0;"></div><div class="r" style="left:979px;top:1702px;width:47px;height:47px;background:#4e86e3;border-radius:4px;"></div><svg class="r" style="left:979px;top:1702px;" width="47" height="47" viewBox="0 0 46 46"><path d="M11 24 L19 32 L35 15" fill="none" stroke="#fff" stroke-width="6" stroke-linecap="round" stroke-linejoin="round"/></svg><svg class="r" style="left:1134px;top:1710px;" width="74" height="38" viewBox="0 0 74 38"><g fill="none" stroke="#4d4f57" stroke-width="2.6"><circle cx="16" cy="22" r="13.2"/><circle cx="57.2" cy="22" r="13.2"/><path d="M10 17 a8 8 0 0 1 5 -5" stroke-width="1.4"/><path d="M56 12 a8 8 0 0 1 6 5" stroke-width="1.4"/></g><path d="M25.5 1 H48 L40 12 V20 H33 V12 Z" fill="#4d4f57"/></svg><div class="r" style="left:1254px;top:1696px;width:149px;height:72px;background:#fff;border:2px solid #d0d3da;border-radius:36px;box-sizing:border-box;"></div><div class="t" style="left:1275.0px;top:1709.1px;font-size:41px;color:#4d4f57;font-weight:700;letter-spacing:0.8px;">3.0</div><svg class="r" style="left:1355px;top:1707px;" width="39" height="39" viewBox="0 0 40 40"><path d="M20 1.5 L24.8 14.6 L38.5 14.9 L27.6 23.3 L31.6 36.6 L20 28.6 L8.4 36.6 L12.4 23.3 L1.5 14.9 L15.2 14.6 Z" fill="#f2c443"/></svg><svg class="r" style="left:1504px;top:1689px;" width="100" height="100" viewBox="0 0 100 100"><defs><clipPath id="av6"><circle cx="50" cy="50" r="50"/></clipPath></defs><g clip-path="url(#av6)"><rect width="100" height="100" fill="#d6d6d4"/><rect x="66" y="0" width="14" height="100" fill="#ecebe8"/><rect x="0" y="60" width="100" height="40" fill="#c9c9c6"/><ellipse cx="55" cy="46" rx="14.5" ry="19" fill="#c49b84"/><path d="M39 40 Q37 16 55 15 Q73 16 71 38 Q68 27 56 27 Q44 27 39 40Z" fill="#27211e"/><rect x="48" y="58" width="14" height="12" fill="#b08570"/><path d="M6 100 Q12 74 40 67 L55 80 L70 67 Q94 74 98 100Z" fill="#1d1d22"/><path d="M43 66 L55 100 L67 66 Z" fill="#f1f1f1"/><path d="M52 72 L58 72 L60 100 L50 100Z" fill="#141414"/></g></svg><div class="t" style="left:1634.5px;top:1699.5px;font-size:45px;color:#4483e0;">Jack Wilson</div><div class="t" style="left:2080.7px;top:1699.5px;font-size:45px;color:#1f2230;">Resume Inbox</div><div class="t" style="left:2798.5px;top:1699.5px;font-size:45px;color:#1f2230;transform:scaleX(1.09);transform-origin:0 0;">$49,000.00</div><div class="t" style="left:3249.4px;top:1699.5px;font-size:45px;color:#1f2230;">Marketing Executive</div><div class="t" style="left:4145.5px;top:1699.5px;font-size:45px;color:#1f2230;">Associated</div><div class="t" style="left:4145.5px;top:1763.5px;font-size:45px;color:#1f2230;transform:scaleX(1.018);transform-origin:0 0;"><span style="color:#9a9a9c">for</span> Marketing Executive</div><div class="r" style="left:796px;top:1858px;width:4180px;height:194px;background:#fefbed;"></div><div class="r" style="left:796px;top:1857.05px;width:4180px;height:1.5px;background:#f0ece0;"></div><div class="r" style="left:979px;top:1899px;width:47px;height:47px;background:#4e86e3;border-radius:4px;"></div><svg class="r" style="left:979px;top:1899px;" width="47" height="47" viewBox="0 0 46 46"><path d="M11 24 L19 32 L35 15" fill="none" stroke="#fff" stroke-width="6" stroke-linecap="round" stroke-linejoin="round"/></svg><svg class="r" style="left:1134px;top:1907px;" width="74" height="38" viewBox="0 0 74 38"><g fill="none" stroke="#4d4f57" stroke-width="2.6"><circle cx="16" cy="22" r="13.2"/><circle cx="57.2" cy="22" r="13.2"/><path d="M10 17 a8 8 0 0 1 5 -5" stroke-width="1.4"/><path d="M56 12 a8 8 0 0 1 6 5" stroke-width="1.4"/></g><path d="M25.5 1 H48 L40 12 V20 H33 V12 Z" fill="#4d4f57"/></svg><div class="r" style="left:1254px;top:1893px;width:149px;height:72px;background:#fff;border:2px solid #d0d3da;border-radius:36px;box-sizing:border-box;"></div><div class="t" style="left:1290.0px;top:1904.7px;font-size:42px;color:#4d4f57;font-weight:700;">--</div><svg class="r" style="left:1350.5px;top:1906px;" width="38" height="38" viewBox="0 0 40 40"><path d="M20 1.5 L24.8 14.6 L38.5 14.9 L27.6 23.3 L31.6 36.6 L20 28.6 L8.4 36.6 L12.4 23.3 L1.5 14.9 L15.2 14.6 Z" fill="none" stroke="#4d4f57" stroke-width="2.8" stroke-linejoin="miter"/></svg><svg class="r" style="left:1504px;top:1886px;" width="100" height="100" viewBox="0 0 100 100"><defs><clipPath id="av7"><circle cx="50" cy="50" r="50"/></clipPath></defs><g clip-path="url(#av7)"><defs><radialGradient id="g2" cx="50%" cy="50%" r="60%"><stop offset="0.5" stop-color="#f2f2f2"/><stop offset="1" stop-color="#8e8e8e"/></radialGradient></defs><rect width="100" height="100" fill="url(#g2)"/><ellipse cx="51" cy="55" rx="22" ry="30" fill="#c2937c"/><path d="M26 46 Q20 8 52 5 Q84 8 78 44 Q72 24 51 24 Q32 24 26 46Z" fill="#35291f"/><path d="M40 88 Q51 96 62 88 L64 100 L38 100Z" fill="#3e322b"/><path d="M38 50 h9 M56 50 h9" stroke="#5a4033" stroke-width="2.5"/></g></svg><div class="t" style="left:1634.5px;top:1896.7px;font-size:45px;color:#4483e0;">Erwin Smith</div><div class="t" style="left:2080.7px;top:1896.7px;font-size:45px;color:#1f2230;">Added by User</div><div class="t" style="left:2798.5px;top:1896.7px;font-size:45px;color:#1f2230;transform:scaleX(1.11);transform-origin:0 0;">$0.00</div><div class="t" style="left:4145.5px;top:1896.7px;font-size:45px;color:#1f2230;">Associated</div><div class="t" style="left:4145.5px;top:1960.7px;font-size:45px;color:#1f2230;transform:scaleX(1.018);transform-origin:0 0;"><span style="color:#9a9a9c">for</span> Marketing Executive</div><div class="r" style="left:796px;top:2052px;width:4180px;height:198px;background:#fff;"></div><div class="r" style="left:796px;top:2051.65px;width:4180px;height:1.5px;background:#f0ece0;"></div><svg class="r" style="left:984px;top:2094px;" width="40" height="48" viewBox="0 0 40 48"><g fill="none" stroke="#c6c7cc" stroke-width="2.5"><path d="M10 20 V13 a10 10 0 0 1 20 0 V20"/><rect x="3" y="20" width="34" height="25" rx="2"/><path d="M20 30 V36"/></g></svg><svg class="r" style="left:1134px;top:2101px;" width="74" height="38" viewBox="0 0 74 38"><g fill="none" stroke="#4d4f57" stroke-width="2.6"><circle cx="16" cy="22" r="13.2"/><circle cx="57.2" cy="22" r="13.2"/><path d="M10 17 a8 8 0 0 1 5 -5" stroke-width="1.4"/><path d="M56 12 a8 8 0 0 1 6 5" stroke-width="1.4"/></g><path d="M25.5 1 H48 L40 12 V20 H33 V12 Z" fill="#4d4f57"/></svg><div class="r" style="left:1254px;top:2088px;width:149px;height:72px;background:#fff;border:2px solid #d0d3da;border-radius:36px;box-sizing:border-box;"></div><div class="t" style="left:1275.0px;top:2100.9px;font-size:41px;color:#4d4f57;font-weight:700;letter-spacing:0.8px;">5.0</div><svg class="r" style="left:1355px;top:2099px;" width="39" height="39" viewBox="0 0 40 40"><path d="M20 1.5 L24.8 14.6 L38.5 14.9 L27.6 23.3 L31.6 36.6 L20 28.6 L8.4 36.6 L12.4 23.3 L1.5 14.9 L15.2 14.6 Z" fill="#3e8e5e"/></svg><svg class="r" style="left:1504px;top:2080px;" width="100" height="100" viewBox="0 0 100 100"><defs><clipPath id="av8"><circle cx="50" cy="50" r="50"/></clipPath></defs><g clip-path="url(#av8)"><rect width="100" height="100" fill="#e7e3d9"/><path d="M16 82 Q8 30 48 13 Q90 20 86 82 Q72 98 50 94 Q26 98 16 82Z" fill="#a26d4b"/><path d="M22 100 Q30 80 50 80 Q70 80 78 100Z" fill="#b98670"/><path d="M14 100 Q20 88 34 86 L44 100Z M86 100 Q80 88 66 86 L56 100Z" fill="#efede8"/><ellipse cx="51" cy="48" rx="16.5" ry="22" fill="#e3b79d"/><path d="M43 62 Q51 68 59 62" stroke="#fff" stroke-width="3" fill="none"/></g></svg><div class="t" style="left:1634.5px;top:2091.3px;font-size:45px;color:#4483e0;">Emma Parker</div><div class="t" style="left:2080.7px;top:2091.3px;font-size:45px;color:#1f2230;">Resume Inbox</div><div class="t" style="left:2798.5px;top:2091.3px;font-size:45px;color:#1f2230;transform:scaleX(1.09);transform-origin:0 0;">$56,000.00</div><div class="t" style="left:3249.4px;top:2091.3px;font-size:45px;color:#1f2230;">Marketing Executive</div><div class="t" style="left:4145.5px;top:2091.3px;font-size:45px;color:#1f2230;">Hired</div><div class="t" style="left:4145.5px;top:2155.3px;font-size:45px;color:#1f2230;transform:scaleX(1.018);transform-origin:0 0;"><span style="color:#9a9a9c">for</span> Accountant</div><div class="r" style="left:796px;top:2250px;width:4180px;height:162px;background:#fefbed;"></div><div class="r" style="left:796px;top:2249.05px;width:4180px;height:1.5px;background:#f0ece0;"></div><div class="r" style="left:979px;top:2291px;width:47px;height:47px;background:#4e86e3;border-radius:4px;"></div><svg class="r" style="left:979px;top:2291px;" width="47" height="47" viewBox="0 0 46 46"><path d="M11 24 L19 32 L35 15" fill="none" stroke="#fff" stroke-width="6" stroke-linecap="round" stroke-linejoin="round"/></svg><svg class="r" style="left:1134px;top:2299px;" width="74" height="38" viewBox="0 0 74 38"><g fill="none" stroke="#4d4f57" stroke-width="2.6"><circle cx="16" cy="22" r="13.2"/><circle cx="57.2" cy="22" r="13.2"/><path d="M10 17 a8 8 0 0 1 5 -5" stroke-width="1.4"/><path d="M56 12 a8 8 0 0 1 6 5" stroke-width="1.4"/></g><path d="M25.5 1 H48 L40 12 V20 H33 V12 Z" fill="#4d4f57"/></svg><div class="r" style="left:1254px;top:2285px;width:149px;height:72px;background:#fff;border:2px solid #d0d3da;border-radius:36px;box-sizing:border-box;"></div><div class="t" style="left:1275.0px;top:2298.3px;font-size:41px;color:#4d4f57;font-weight:700;letter-spacing:0.8px;">5.0</div><svg class="r" style="left:1355px;top:2296px;" width="39" height="39" viewBox="0 0 40 40"><path d="M20 1.5 L24.8 14.6 L38.5 14.9 L27.6 23.3 L31.6 36.6 L20 28.6 L8.4 36.6 L12.4 23.3 L1.5 14.9 L15.2 14.6 Z" fill="#3e8e5e"/></svg><svg class="r" style="left:1504px;top:2278px;" width="100" height="100" viewBox="0 0 100 100"><defs><clipPath id="av9"><circle cx="50" cy="50" r="50"/></clipPath></defs><g clip-path="url(#av9)"><rect width="100" height="100" fill="#a2a19b"/><rect x="12" y="6" width="10" height="40" fill="#6d86b8"/><rect x="70" y="10" width="22" height="50" fill="#b48a76"/><rect x="0" y="60" width="100" height="40" fill="#c9c7c0"/><path d="M18 82 Q10 26 50 17 Q92 24 84 82 Q70 94 50 90 Q30 94 18 82Z" fill="#2a211c"/><ellipse cx="50" cy="52" rx="15.5" ry="21" fill="#d6a78c"/><path d="M43 63 Q50 69 57 63" stroke="#fff" stroke-width="3" fill="none"/><path d="M8 100 Q16 76 50 74 Q84 76 92 100Z" fill="#56574f"/></g></svg><div class="t" style="left:1634.5px;top:2288.7px;font-size:45px;color:#4483e0;">Emma Parker</div><div class="t" style="left:2080.7px;top:2288.7px;font-size:45px;color:#1f2230;">Added by User</div><div class="t" style="left:2798.5px;top:2288.7px;font-size:45px;color:#1f2230;transform:scaleX(1.09);transform-origin:0 0;">$24,000.00</div><div class="t" style="left:3249.4px;top:2288.7px;font-size:45px;color:#1f2230;">Product Marketer</div><div class="t" style="left:4145.5px;top:2288.7px;font-size:45px;color:#1f2230;">Associated</div><div class="t" style="left:4145.5px;top:2352.7px;font-size:45px;color:#1f2230;transform:scaleX(1.018);transform-origin:0 0;"><span style="color:#9a9a9c">for</span> Marketing Executive</div><div class="t" style="left:916.5px;top:2487.8px;font-size:44.5px;color:#1f2230;">Total Count: ###</div><div class="r" style="left:4054px;top:2469px;width:533px;height:85px;background:#f9f9fa;border:2px solid #d2d3d8;border-radius:9px;box-sizing:border-box;"></div><div class="t" style="left:4086.0px;top:2488.8px;font-size:43.5px;color:#2c2e35;transform:scaleX(0.975);transform-origin:0 0;">100 Records Per Page</div><svg class="r" style="left:4533px;top:2504px;" width="26" height="22" viewBox="0 0 26 22"><path d="M2 3 H24 L13 19 Z" fill="#4d4f57"/></svg><svg class="r" style="left:4654px;top:2491px;" width="30" height="40" viewBox="0 0 30 40"><path d="M22 4 L8 20 L22 36" fill="none" stroke="#d3d6db" stroke-width="4.6" stroke-linecap="round"/></svg><div class="t" style="left:4713.5px;top:2489.2px;font-size:43.5px;color:#1d1f2c;transform:scaleX(0.78);transform-origin:0 0;font-weight:700;">1</div><div class="t" style="left:4743.5px;top:2489.2px;font-size:43.5px;color:#bdbdbd;transform:scaleX(1.15);transform-origin:0 0;">to</div><div class="t" style="left:4803.0px;top:2489.2px;font-size:43.5px;color:#1d1f2c;transform:scaleX(1.07);transform-origin:0 0;font-weight:700;">22</div><svg class="r" style="left:4890px;top:2491px;" width="30" height="40" viewBox="0 0 30 40"><path d="M8 4 L22 20 L8 36" fill="none" stroke="#d3d6db" stroke-width="4.6" stroke-linecap="round"/></svg></div></div><div class="r" style="left:1453px;top:12px;width:715px;height:1623px;background:#fff;border-radius:46px 46px 36px 36px;box-shadow:0 5px 12px rgba(0,0,0,0.15);"></div><div class="t" style="left:1508.5px;top:60.1px;font-size:53px;color:#2e3038;transform:scaleX(0.97);transform-origin:0 0;-webkit-text-stroke:0.3px #2e3038;">Send SMS</div><div class="t" style="left:1508.5px;top:182.1px;font-size:53px;color:#2e3038;-webkit-text-stroke:0.3px #2e3038;">Add Tags</div><div class="t" style="left:1508.5px;top:304.1px;font-size:53px;color:#2e3038;-webkit-text-stroke:0.3px #2e3038;">Remove Tags</div><div class="t" style="left:1508.5px;top:424.6px;font-size:53px;color:#2e3038;transform:scaleX(1.02);transform-origin:0 0;-webkit-text-stroke:0.3px #2e3038;">Change Owner</div><div class="t" style="left:1508.5px;top:546.1px;font-size:53px;color:#2e3038;transform:scaleX(0.98);transform-origin:0 0;-webkit-text-stroke:0.3px #2e3038;">Create Task</div><div class="t" style="left:1508.5px;top:666.4px;font-size:53px;color:#2e3038;-webkit-text-stroke:0.3px #2e3038;">Update Response</div><div class="t" style="left:1508.5px;top:856.1px;font-size:53px;color:#2e3038;-webkit-text-stroke:0.3px #2e3038;">Mail Merge</div><div class="t" style="left:1508.5px;top:976.6px;font-size:53px;color:#2e3038;-webkit-text-stroke:0.3px #2e3038;">Mass Update</div><div class="t" style="left:1508.5px;top:1096.8px;font-size:53px;color:#2e3038;-webkit-text-stroke:0.3px #2e3038;">Run Macro</div><div class="t" style="left:1508.5px;top:1282.4px;font-size:53px;color:#2e3038;-webkit-text-stroke:0.3px #2e3038;">Print Mailing Labels</div><div class="t" style="left:1508.5px;top:1403.6px;font-size:53px;color:#2e3038;-webkit-text-stroke:0.3px #2e3038;">Delete</div><div class="t" style="left:1508.5px;top:1525.1px;font-size:53px;color:#2e3038;transform:scaleX(1.05);transform-origin:0 0;-webkit-text-stroke:0.3px #2e3038;">Download Attachments</div><div class="r" style="left:1479px;top:791px;width:658px;height:2px;background:#ebebed;"></div><div class="r" style="left:1479px;top:1219px;width:658px;height:2px;background:#ebebed;"></div><svg class="r" style="left:1385px;top:205px;" width="80" height="100" viewBox="0 0 80 100"><defs><filter id="ps" x="-50%" y="-50%" width="200%" height="200%"><feGaussianBlur stdDeviation="2.5"/></filter></defs><path d="M7.6 50 L68 13 L68 88 Z" fill="#000" opacity="0.16" filter="url(#ps)" transform="translate(0,2)"/><path d="M7.6 48.5 L68 11.5 L68 85 Z" fill="#fff"/><rect x="68.2" y="0" width="11.8" height="100" fill="#fff"/></svg><div class="r" style="left:1453px;top:1466px;width:716px;height:170px;border:10px solid #e31b3b;border-top-width:11px;border-radius:0 0 36px 36px;box-sizing:border-box;"></div><svg class="r" style="left:2086px;top:1494px;" width="58" height="63" viewBox="0 0 49 52"><g fill="#f3c54a"><path d="M37 0.5 Q38.68 9.32 47.5 11 Q38.68 12.68 37 21.5 Q35.32 12.68 26.5 11 Q35.32 9.32 37 0.5Z"/><path d="M12.5 17 Q14.42 27.08 24.5 29 Q14.42 30.92 12.5 41 Q10.58 30.92 0.5 29 Q10.58 27.08 12.5 17Z"/><path d="M37 30 Q38.76 39.24 48 41 Q38.76 42.76 37 52 Q35.24 42.76 26 41 Q35.24 39.24 37 30Z"/></g></svg><svg class="r" style="left:2170px;top:1470px;" width="200" height="170" viewBox="0 0 200 170"><g fill="none" stroke="#e31b3b" stroke-width="9" stroke-linecap="round" stroke-linejoin="round"><path d="M183 18 C185 80 140 110 20 115"/><path d="M46 88 L18 115 L46 140"/></g></svg>
</body></html>
